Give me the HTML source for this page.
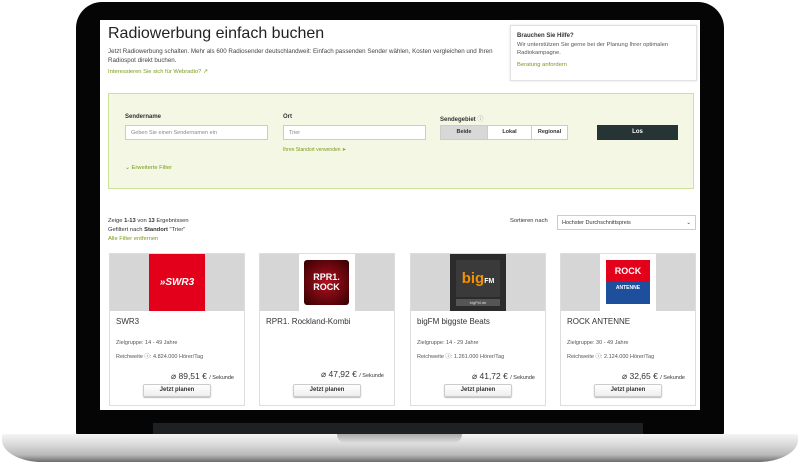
<!DOCTYPE html>
<html><head><meta charset="utf-8"><style>
*{margin:0;padding:0;box-sizing:border-box}
body{width:800px;height:468px;background:#fff;position:relative;overflow:hidden;font-family:"Liberation Sans",sans-serif;color:#333}
.abs{position:absolute}
.bezel{left:76px;top:2px;width:648px;height:436px;background:#050505;border-radius:26px 26px 6px 6px}
.screen{left:100px;top:20px;width:600px;height:390px;background:#fff;overflow:hidden}
.hinge{left:153px;top:423px;width:490px;height:12px;background:#1e2124}
.base{left:2px;top:434px;width:796px;height:28px;border-radius:2px 2px 40px 40px/2px 2px 22px 22px;background:linear-gradient(#f4f4f4 0%,#d8d8d8 40%,#b8b8b8 75%,#6c6c6c 100%)}
.notch{left:337px;top:434px;width:125px;height:9px;border-radius:0 0 10px 10px;background:linear-gradient(#aaa,#ddd)}
.s{position:absolute;font-size:6px;white-space:nowrap}
.g{color:#7a9a1a}
.inp{position:absolute;height:15px;background:#fff;border:1px solid #ccc;font-size:5.5px;color:#888;padding:4px 5px}
.card{position:absolute;top:233px;width:136px;height:153px;border:1px solid #ddd;background:#fff}
.card .img{position:absolute;left:0;top:0;width:134px;height:57px;background:#d6d6d6}
.card .logo{position:absolute;left:39px;top:0;width:56px;height:57px}
.card .n{position:absolute;left:6px;top:63px;font-size:8px;color:#333}
.card .z{position:absolute;left:6px;top:86px;font-size:5.5px;color:#555}
.card .r{position:absolute;left:6px;top:98px;font-size:5.5px;color:#555}
.card .p{position:absolute;right:10px;top:117px;font-size:8.5px;color:#333}
.card .p small{font-size:5.5px}
.card .b{position:absolute;left:33px;top:130px;width:68px;height:13px;border:1px solid #ccc;border-radius:2px;background:linear-gradient(#fff,#eee);box-shadow:0 1px 1px #bbb;font-size:6px;font-weight:bold;text-align:center;line-height:11px;color:#333}
</style></head><body>
<div class="abs bezel"></div>
<div class="abs hinge"></div>
<div class="abs base"></div>
<div class="abs notch"></div>
<div class="abs screen">
 <div class="s" style="left:8px;top:5px;font-size:16px;color:#222">Radiowerbung einfach buchen</div>
 <div class="s" style="left:8px;top:28px;font-size:6.2px;color:#444">Jetzt Radiowerbung schalten. Mehr als 600 Radiosender deutschlandweit: Einfach passenden Sender wählen, Kosten vergleichen und Ihren</div>
 <div class="s" style="left:8px;top:37px;font-size:6.2px;color:#444">Radiospot direkt buchen.</div>
 <div class="s g" style="left:8px;top:49px;font-size:5.8px">Interessieren Sie sich für Webradio? ↗</div>
 <div class="abs" style="left:410px;top:5px;width:187px;height:56px;border:1px solid #e2e2e2;box-shadow:0 0 2px #ddd"></div>
 <div class="s" style="left:417px;top:13px;font-size:6px;font-weight:bold">Brauchen Sie Hilfe?</div>
 <div class="s" style="left:417px;top:22px;font-size:5.8px;color:#555">Wir unterstützen Sie gerne bei der Planung Ihrer optimalen</div>
 <div class="s" style="left:417px;top:30px;font-size:5.8px;color:#555">Radiokampagne.</div>
 <div class="s g" style="left:417px;top:42px;font-size:5.8px">Beratung anfordern</div>
 <div class="abs" style="left:8px;top:73px;width:586px;height:96px;background:#f3f7e4;border:1px solid #cfe09a"></div>
 <div class="s" style="left:25px;top:94px;font-weight:bold;font-size:6px">Sendername</div>
 <div class="s" style="left:183px;top:94px;font-weight:bold;font-size:6px">Ort</div>
 <div class="s" style="left:340px;top:94px;font-weight:bold;font-size:6px">Sendegebiet <span style="color:#999;font-weight:normal">ⓘ</span></div>
 <div class="inp" style="left:25px;top:105px;width:143px">Geben Sie einen Sendernamen ein</div>
 <div class="inp" style="left:183px;top:105px;width:143px">Trier</div>
 <div class="abs" style="left:340px;top:105px;width:128px;height:15px;border:1px solid #ccc;background:#fff;display:flex;font-size:5.5px;font-weight:bold;text-align:center;line-height:13px">
  <div style="width:46px;background:#d8d8d8">Beide</div><div style="width:44px;border-left:1px solid #ccc">Lokal</div><div style="flex:1;border-left:1px solid #ccc">Regional</div></div>
 <div class="abs" style="left:497px;top:105px;width:81px;height:15px;background:#263436;color:#fff;font-size:6px;font-weight:bold;text-align:center;line-height:15px">Los</div>
 <div class="s g" style="left:183px;top:127px;font-size:5px">Ihren Standort verwenden ➤</div>
 <div class="s g" style="left:25px;top:145px;font-size:5.8px">⌄ Erweiterte Filter</div>
 <div class="s" style="left:8px;top:198px;font-size:5.8px">Zeige <b>1-13</b> von <b>13</b> Ergebnissen</div>
 <div class="s" style="left:8px;top:207px;font-size:5.8px">Gefiltert nach <b>Standort</b> "Trier"</div>
 <div class="s g" style="left:8px;top:216px;font-size:5.8px">Alle Filter entfernen</div>
 <div class="s" style="left:410px;top:198px;font-size:5.8px">Sortieren nach</div>
 <div class="inp" style="left:457px;top:195px;width:139px;color:#333;height:15px;padding:4px">Hochster Durchschnittspreis<span style="float:right">⌄</span></div>

 <div class="card" style="left:9px"><div class="img"></div><div class="logo" style="background:#e3001b;color:#fff;font-weight:bold;font-style:italic;font-size:10px;text-align:center;line-height:57px">»SWR3</div>
  <div class="n">SWR3</div><div class="z">Zielgruppe: 14 - 49 Jahre</div><div class="r">Reichweite ⓘ: 4.824.000 Hörer/Tag</div><div class="p">⌀ 89,51 € <small>/ Sekunde</small></div><div class="b">Jetzt planen</div></div>
 <div class="card" style="left:159px"><div class="img"></div><div class="logo" style="background:#fff"><div style="position:absolute;left:5px;top:6px;width:45px;height:45px;border-radius:3px;background:radial-gradient(#b01020,#300);color:#fff;font-weight:bold;font-size:9px;text-align:center;line-height:10px;padding-top:12px">RPR1.<br>ROCK</div></div>
  <div class="n">RPR1. Rockland-Kombi</div><div class="p" style="top:115px">⌀ 47,92 € <small>/ Sekunde</small></div><div class="b">Jetzt planen</div></div>
 <div class="card" style="left:310px"><div class="img"></div><div class="logo" style="background:#2b2b2b"><div style="position:absolute;left:6px;top:6px;width:44px;height:37px;background:#3a3a3a;color:#f39200;font-weight:bold;font-size:15px;line-height:37px;text-align:center">big<span style="color:#fff;font-size:7px">FM</span></div><div style="position:absolute;left:6px;top:45px;width:44px;height:7px;background:#555;color:#ddd;font-size:4px;text-align:center;line-height:7px">bigFM.de</div></div>
  <div class="n">bigFM biggste Beats</div><div class="z">Zielgruppe: 14 - 29 Jahre</div><div class="r">Reichweite ⓘ: 1.261.000 Hörer/Tag</div><div class="p">⌀ 41,72 € <small>/ Sekunde</small></div><div class="b">Jetzt planen</div></div>
 <div class="card" style="left:460px"><div class="img"></div><div class="logo" style="background:#fff"><div style="position:absolute;left:6px;top:6px;width:44px;height:44px;background:#e3001b;color:#fff;font-weight:bold;text-align:center"><div style="font-size:9px;line-height:22px">ROCK</div><div style="background:#1d4f9c;height:22px;font-size:5px;line-height:12px">ANTENNE</div></div></div>
  <div class="n">ROCK ANTENNE</div><div class="z">Zielgruppe: 30 - 49 Jahre</div><div class="r">Reichweite ⓘ: 2.124.000 Hörer/Tag</div><div class="p">⌀ 32,65 € <small>/ Sekunde</small></div><div class="b">Jetzt planen</div></div>
</div>
</body></html>
